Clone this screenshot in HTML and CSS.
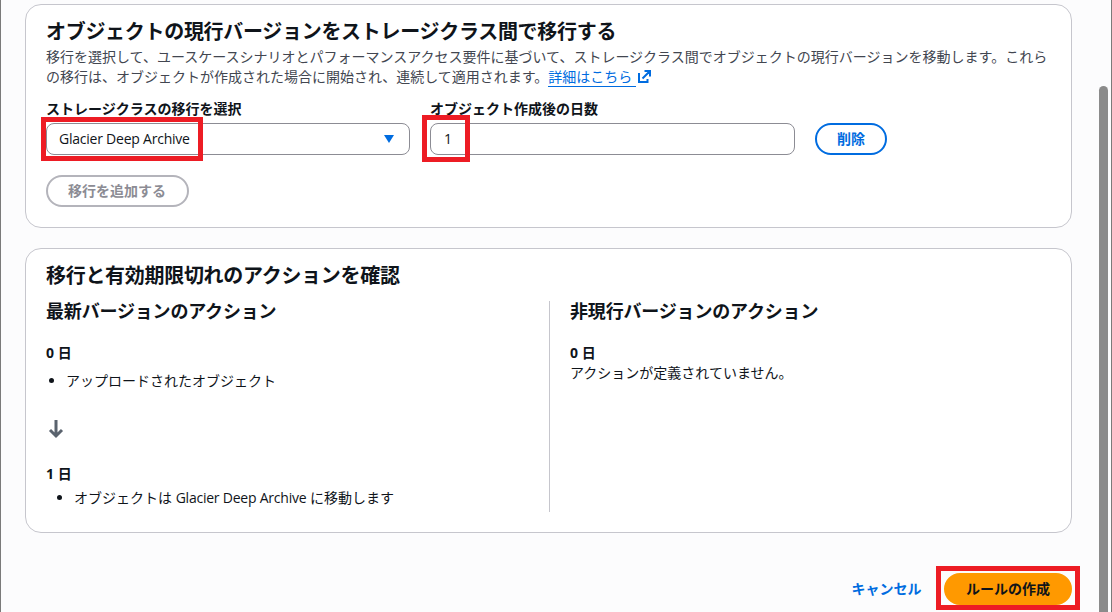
FILE: index.html
```html
<!DOCTYPE html>
<html lang="ja">
<head>
    <meta charset="UTF-8">
    <meta name="viewport" content="width=device-width, initial-scale=1.0">
    <title>ライフサイクルルールを作成する</title>
    <link rel="stylesheet" href="styles.css">
</head>
<body>
    <main class="page">
        <section class="card">
            <h2>オブジェクトの現行バージョンをストレージクラス間で移行する</h2>
            <p class="description">移行を選択して、ユースケースシナリオとパフォーマンスアクセス要件に基づいて、ストレージクラス間でオブジェクトの現行バージョンを移動します。これらの移行は、オブジェクトが作成された場合に開始され、連続して適用されます。<a class="link" href="#">詳細はこちら </a><svg class="external" viewBox="0 0 16 16" width="16" height="16"><path d="M8.5 2H14v5.5M6.5 9.5L13.5 2.5M3 4v9h8.5V10"/></svg></p>

            <div class="form-row">
                <div class="field">
                    <div class="label">ストレージクラスの移行を選択</div>
                    <div class="control select">
                        <span class="latin">Glacier Deep Archive</span>
                        <svg class="caret" viewBox="0 0 12 10" width="12" height="10"><path d="M1 1h10L6 9z"/></svg>
                        <div class="mark mark-select"></div>
                    </div>
                </div>
                <div class="field days">
                    <div class="label">オブジェクト作成後の日数</div>
                    <div class="control">
                        <span>1</span>
                        <div class="mark mark-days"></div>
                    </div>
                </div>
                <button class="btn">削除</button>
            </div>
            <button class="btn btn-disabled">移行を追加する</button>
        </section>

        <section class="card review">
            <h2>移行と有効期限切れのアクションを確認</h2>
            <div class="columns">
                <div class="column">
                    <h3>最新バージョンのアクション</h3>
                    <div class="day">0 日</div>
                    <ul class="uploaded">
                        <li>アップロードされたオブジェクト</li>
                    </ul>
                    <svg class="arrow" viewBox="0 0 20 20" width="20" height="20"><path d="M10 1v16M4 11l6 6 6-6"/></svg>
                    <div class="day">1 日</div>
                    <ul class="moved">
                        <li>オブジェクトは <span class="latin">Glacier Deep Archive</span> に移動します</li>
                    </ul>
                </div>
                <div class="column">
                    <h3>非現行バージョンのアクション</h3>
                    <div class="day">0 日</div>
                    <div>アクションが定義されていません。</div>
                </div>
            </div>
        </section>

        <footer class="actions">
            <a class="cancel" href="#">キャンセル</a>
            <div class="submit">
                <button class="btn btn-primary">ルールの作成</button>
                <div class="mark mark-submit"></div>
            </div>
        </footer>
    </main>
    <div class="scrollbar"><div class="thumb"></div></div>
</body>
</html>
```
FILE: styles.css
```css
* {
    box-sizing: border-box;
}

body {
    margin: 0;
    height: 612px;
    overflow: hidden;
    display: flex;
    justify-content: space-between;
    background-color: #fcfcfd;
    border-left: 1px solid #7a7a7a;
    border-right: 1px solid #7a7a7a;
    color: #0f141a;
    font-family: "Open Sans", "Noto Sans CJK JP", sans-serif;
    font-size: 14px;
    line-height: 20px;
}

.page {
    width: 1071px;
    padding: 4px 0 0 24px;
}

.card {
    height: 224px;
    padding: 15px 20px 20px;
    background-color: white;
    border: 1px solid #c6c6cd;
    border-radius: 16px;
}

h2 {
    margin: 0;
    font-size: 20px;
    line-height: 24px;
    letter-spacing: -0.3px;
}

h3 {
    margin: 0 0 21px;
    font-size: 18px;
    line-height: 21px;
    letter-spacing: -0.18px;
}

.description {
    margin: 3px 0 12px;
    height: 40px;
    color: #424650;
}

.link {
    color: #006ce0;
    text-decoration: none;
    border-bottom: 1px solid #006ce0;
    white-space: pre;
}

.external {
    vertical-align: -3px;
    fill: none;
    stroke: #006ce0;
    stroke-width: 2;
}

.form-row {
    display: flex;
    align-items: flex-end;
    gap: 20px;
    margin-bottom: 20px;
}

.field {
    width: 364px;
}

.days {
    width: 365px;
}

.label {
    margin-bottom: 4px;
    font-weight: bold;
}

.control {
    position: relative;
    display: flex;
    align-items: center;
    height: 32px;
    padding: 0 12px;
    border: 1px solid #8c8c94;
    border-radius: 8px;
}

.days .control {
    padding-left: 13px;
}

.select {
    justify-content: space-between;
    padding-right: 14px;
}

.latin {
    letter-spacing: -0.23px;
}

.caret {
    fill: #006ce0;
}

.btn {
    display: block;
    height: 32px;
    padding: 0 20px;
    background-color: white;
    border: 2px solid #006ce0;
    border-radius: 20px;
    color: #006ce0;
    font: inherit;
    font-weight: bold;
    line-height: 20px;
    white-space: nowrap;
}

.btn-disabled {
    width: 143px;
    padding: 0 20px 0 19px;
    border-color: #b4b4bb;
    color: #8c8c94;
}

.btn-primary {
    width: 128px;
    background-color: #ff9900;
    border-color: #ff9900;
    color: #0f141a;
}

.review {
    height: 285px;
    margin-top: 20px;
}

.columns {
    display: grid;
    grid-template-columns: 503px 1fr;
    margin-top: 13px;
    height: 211px;
}

.column + .column {
    padding-left: 20px;
    border-left: 1px solid #c6c6cd;
}

.day {
    font-weight: bold;
}

ul {
    margin: 0;
}

.uploaded {
    margin-top: 8px;
    padding-left: 20px;
}

.moved {
    margin-top: 4px;
    padding-left: 28px;
}

.arrow {
    display: block;
    margin: 28px 0 25px;
    fill: none;
    stroke: #5a636e;
    stroke-width: 3;
}

.actions {
    display: flex;
    justify-content: flex-end;
    align-items: center;
    gap: 22.5px;
    margin-top: 40px;
}

.cancel {
    color: #006ce0;
    font-weight: bold;
    text-decoration: none;
}

.submit {
    position: relative;
}

/* red highlight frames */
.mark {
    position: absolute;
    border: 5px solid #ed1c24;
}

.mark-select {
    left: -6px;
    top: -7px;
    width: 162px;
    height: 44px;
}

.mark-days {
    left: -9px;
    top: -9px;
    width: 48px;
    height: 47px;
}

.mark-submit {
    left: -8px;
    top: -7px;
    width: 144px;
    height: 44px;
}

.scrollbar {
    width: 12px;
    padding-top: 86px;
}

.thumb {
    width: 9px;
    height: 540px;
    background-color: #8b8b8b;
    border-radius: 5px;
}
```
